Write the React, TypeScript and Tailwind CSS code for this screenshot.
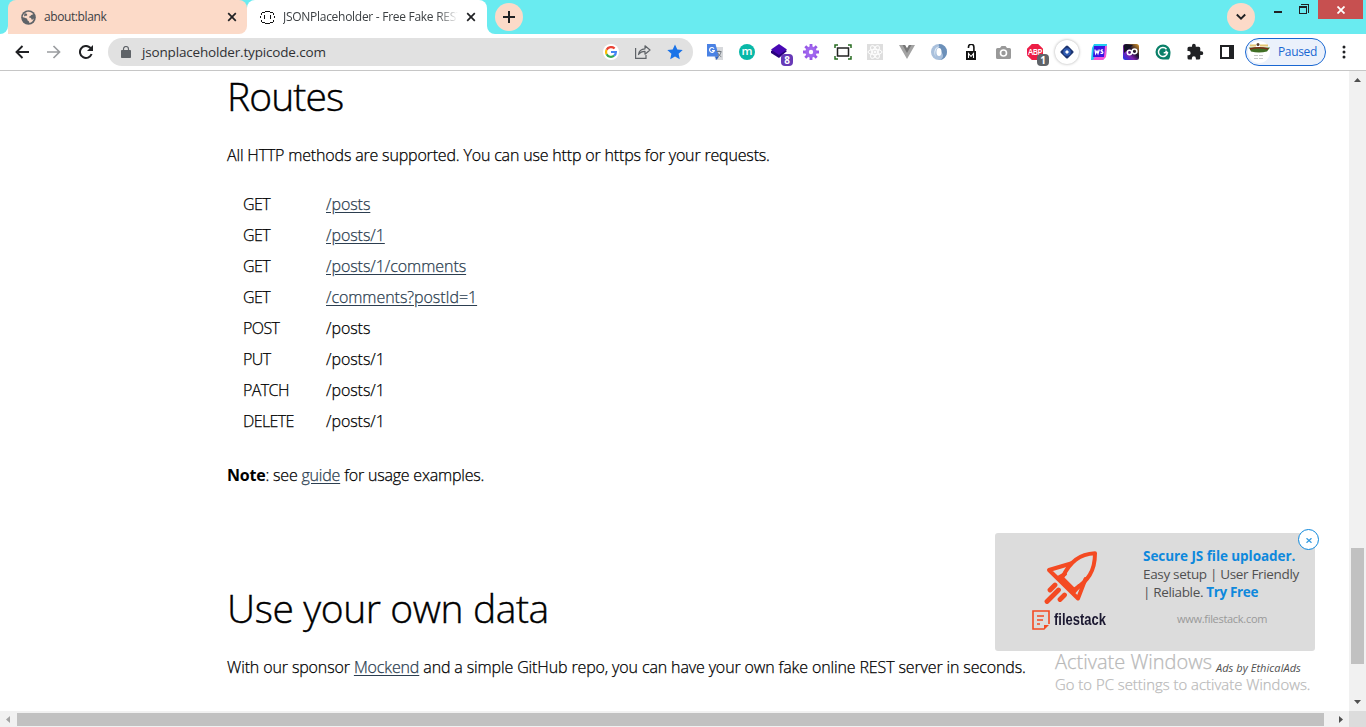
import React from "react";

const routes: { method: string; path: string; link: boolean }[] = [
  { method: "GET", path: "/posts", link: true },
  { method: "GET", path: "/posts/1", link: true },
  { method: "GET", path: "/posts/1/comments", link: true },
  { method: "GET", path: "/comments?postId=1", link: true },
  { method: "POST", path: "/posts", link: false },
  { method: "PUT", path: "/posts/1", link: false },
  { method: "PATCH", path: "/posts/1", link: false },
  { method: "DELETE", path: "/posts/1", link: false },
];

function Close() {
  return (
    <svg className="size-2.5" viewBox="0 0 10 10" stroke="#202124" strokeWidth="1.7">
      <path d="M1.2 1.2l7.6 7.6M8.8 1.2L1.2 8.8" />
    </svg>
  );
}

function TabStrip() {
  return (
    <div className="flex h-[34px] shrink-0 bg-[#69ebf0] text-[12px] text-[#3c4043]">
      <div className="flex w-2 items-end bg-white">
        <div className="h-full w-2 rounded-br-lg bg-[#69ebf0]" />
      </div>
      <div className="flex w-[239px] bg-white">
        <div className="flex w-full items-center rounded-t-lg rounded-br-lg bg-[#fcdac8] pl-[13px] pr-[10px] shadow-[0_-8px_0_0_#69ebf0]">
          <svg className="size-[15px] shrink-0" viewBox="0 0 15 15">
            <circle cx="7.5" cy="7.5" r="7.3" fill="#5f6368" />
            <path d="M7.6 1.7c2 .1 3.7 1 4.7 2.6-.8.6-2 .3-2.5 1.2-.3.9-1.7.6-1.7 1.6 0 .8 1.4.6 2 1.1.5.6 0 1.4 1 1.5.6 0 1.200-.7 1.800-1.100-.5 2.200-2.300 4-4.600 4.500.3-1.100-.5-1.900-1.300-2.300-1-.5-.4-1.500-1.100-2.200C4.900 7.700 3 7.600 1.700 6.900 2 4 4.500 1.700 7.600 1.700z" fill="#fcdac8" />
            <path d="M3.500 3.200C5.200 3 6.500 4 6.200 5.200 5.800 6.300 3.800 5.300 3 6.500" fill="#5f6368" />
          </svg>
          <span className="ml-2 flex-1 tracking-[-0.4px]">about:blank</span>
          <Close />
        </div>
      </div>
      <div className="flex w-[240px] bg-[#69ebf0]">
        <div className="flex w-full items-center rounded-t-lg bg-white pl-[13px] pr-[11px]">
          <svg className="size-[15px] shrink-0" viewBox="0 0 15 15" fill="none" stroke="#111" shapeRendering="crispEdges">
            <path d="M2 2.500h3M5 1.500h5M10 2.500h3M2 12.500h3M5 13.500h5M10 12.500h3M1.500 3v2M13.500 3v2M1.500 10v2M13.500 10v2M.5 6v2M14.500 6v2" />
            <path d="M4.500 5v4M10.500 5v4" />
          </svg>
          <span className="ml-2 w-[175px] overflow-hidden whitespace-nowrap tracking-[-0.28px] [mask-image:linear-gradient(to_right,#000_88%,transparent)]">
            JSONPlaceholder - Free Fake REST
          </span>
          <span className="ml-auto"><Close /></span>
        </div>
      </div>
      <div className="w-2 bg-white"><div className="h-full w-2 rounded-bl-lg bg-[#69ebf0]" /></div>
      <div className="flex size-7 items-center justify-center self-center rounded-full bg-[#fcdac8]">
        <svg className="size-3" viewBox="0 0 12 12" stroke="#202124" strokeWidth="2"><path d="M6 0v12M0 6h12" /></svg>
      </div>
      <div className="ml-auto flex">
        <div className="flex size-7 items-center justify-center self-center rounded-full bg-[#fcdac8]">
          <svg className="size-[10px]" viewBox="0 0 10 10" fill="none" stroke="#202124" strokeWidth="1.9"><path d="M.8 2.500L5 6.700l4.200-4.200" /></svg>
        </div>
        <svg className="ml-[19px] h-5 w-11" viewBox="0 0 44 20" fill="none" stroke="#202124" shapeRendering="crispEdges">
          <path d="M0 12h8" strokeWidth="2" />
          <path d="M27 4.500h7.500V13" />
          <path d="M25.500 7v6.500h7V7" /><path d="M25 7h8" strokeWidth="2" />
        </svg>
        <div className="mr-[3px] flex h-[19px] w-[45px] items-center justify-center bg-[#c75050]">
          <svg className="size-2" viewBox="0 0 8 8" stroke="white" strokeWidth="1.800"><path d="M.5.5l7 7M7.500.5l-7 7" /></svg>
        </div>
      </div>
    </div>
  );
}

function Slot({ children }: { children: React.ReactNode }) {
  return <div className="relative flex w-8 shrink-0 items-center justify-center">{children}</div>;
}

function Extensions() {
  return (
    <div className="flex h-7">
      <Slot>
        <svg className="size-4" viewBox="0 0 16 16">
          <path d="M6 3h10v13H8z" fill="#d7d9dc" /><path d="M0 0h8.500l3.500 12.500H0z" fill="#4a82e4" /><path d="M8 12.500h4L9.500 16z" fill="#3063c0" />
          <path d="M7 4.600A2.400 2.400 0 1 0 7.300 6.500H5" fill="none" stroke="white" strokeWidth="1.200" />
          <path d="M9.500 7.500h5M12 6.500v1M14 8c-.5 2.500-2 4-3.500 4.500M10.800 9c.7 1.800 2 3 3.500 3.700" fill="none" stroke="#717880" strokeWidth="1" />
        </svg>
      </Slot>
      <Slot><div className="flex size-4 items-center justify-center rounded-full bg-[#08b8a8] pb-[3px] text-[11.500px] font-semibold leading-none text-white">m</div></Slot>
      <Slot>
        <svg className="size-4" viewBox="0 0 16 16"><path d="M0 7l8-5 8 5-8 7-8-5z" fill="#29027c" /><path d="M0 5.500L8 0l8 5.500L8 11z" fill="#4808b4" /></svg>
        <span className="absolute left-[18px] top-4 flex h-3 w-3 items-center justify-center rounded-sm bg-[#673ab7] text-[10px] font-bold leading-none text-white">8</span>
      </Slot>
      <Slot>
        <svg className="size-4" viewBox="0 0 16 16"><path d="M8 0v16M0 8h16M2.300 2.300l11.400 11.400M13.700 2.300L2.300 13.700" stroke="#9758e6" strokeWidth="2.800" /><circle cx="8" cy="8" r="5.700" fill="#a066ee" /><circle cx="8" cy="8" r="2.200" fill="white" /></svg>
      </Slot>
      <Slot>
        <svg className="h-4 w-[18px]" viewBox="0 0 18 16" fill="none" strokeWidth="1.500"><path d="M1 4V1h3M14 1h3v3M1 12v3h3M17 12v3h-3" stroke="#276c21" /><rect x="3.500" y="4" width="11" height="8" stroke="#222" /></svg>
      </Slot>
      <Slot>
        <svg className="size-4" viewBox="0 0 16 16" fill="none" stroke="white"><rect width="16" height="16" fill="#dedede" stroke="none" /><ellipse cx="8" cy="8" rx="7" ry="2.700" /><ellipse cx="8" cy="8" rx="7" ry="2.700" transform="rotate(60 8 8)" /><ellipse cx="8" cy="8" rx="7" ry="2.700" transform="rotate(120 8 8)" /><circle cx="8" cy="8" r="1" fill="white" /></svg>
      </Slot>
      <Slot>
        <svg className="h-[14px] w-4" viewBox="0 0 16 14"><path d="M0 0h6l2 3.500L10 0h6L8 14z" fill="#a3a3a3" /><path d="M3.500 0H6l2 3.500L10 0h2.500L8 8z" fill="#777" /></svg>
      </Slot>
      <Slot>
        <svg className="size-4" viewBox="0 0 16 16"><circle cx="8" cy="8" r="8" fill="#a9c0dc" /><path d="M8 0a8 8 0 0 1 0 16c4-1 5-4 3-7S7 3 8 0z" fill="#6c90b9" /><path d="M9 2C4 3 2 7 4.500 13 3.500 7 5 4 9 2z" fill="#e6f0fa" /><ellipse cx="8" cy="8" rx="2.500" ry="4" fill="#fff" /></svg>
      </Slot>
      <Slot>
        <svg className="h-[17px] w-3" viewBox="0 0 12 17"><path d="M3.500 4V3a2.700 2.700 0 0 1 5.400 0v5" fill="none" stroke="#111" strokeWidth="1.600" /><path d="M1 7h10v9H1z" fill="#111" /><path d="M3.500 14V9.500L6 12.500l2.500-3V14" fill="none" stroke="white" strokeWidth="1.100" /></svg>
      </Slot>
      <Slot>
        <svg className="h-[13px] w-[15px]" viewBox="0 0 15 13"><path d="M1.500 2H4l1.500-2h4L11 2h2.500A1.500 1.500 0 0 1 15 3.500v8a1.500 1.500 0 0 1-1.500 1.500h-12A1.500 1.500 0 0 1 0 11.500v-8A1.500 1.500 0 0 1 1.500 2z" fill="#999" /><circle cx="7.500" cy="7" r="3" fill="#999" stroke="white" strokeWidth="1.600" /></svg>
      </Slot>
      <Slot>
        <div className="flex size-4 items-center justify-center bg-[#ed1e45] text-[8px] font-semibold leading-none tracking-[-0.5px] text-white [clip-path:polygon(30%_0,70%_0,100%_30%,100%_70%,70%_100%,30%_100%,0_70%,0_30%)]">ABP</div>
        <span className="absolute left-[18px] top-4 flex h-3 w-3 items-center justify-center rounded-sm bg-[#5f6368] text-[10px] font-bold leading-none text-white">1</span>
      </Slot>
      <Slot>
        <div className="flex size-6 items-center justify-center rounded-full bg-white shadow-[0_0_3px_#aaa]">
          <svg className="size-[14px]" viewBox="0 0 14 14"><path d="M7 2L12 7 7 12 2 7z" fill="#1c3470" stroke="#1c3470" strokeWidth="3" strokeLinejoin="round" /><circle cx="7" cy="7" r="3.800" fill="#315db5" /><path d="M7 5L9 7 7 9 5 7z" fill="#fff" /></svg>
        </div>
      </Slot>
      <Slot>
        <svg className="size-4" viewBox="0 0 16 16"><path d="M3 0h13l-1 12-3 4H0L1 4z" fill="#22ccf0" /><path d="M9 2h7l-1 11-3 3H2l3-5z" fill="#f554d8" /><path d="M3 2h11l-1 11H2z" fill="#3814e2" /><path d="M4 5.500l.6 4L6 7l1 2.500L8.300 5.500M12 6c-2-.7-2.700 1-1 1.500s.8 2.500-1.500 1.600" stroke="white" fill="none" strokeWidth="1.300" /></svg>
      </Slot>
      <Slot>
        <svg className="size-4" viewBox="0 0 16 16"><defs><linearGradient id="orb" x1="0" y1="1" x2="1" y2="0"><stop stopColor="#1a35ec" /><stop offset=".35" stopColor="#7e20b0" /><stop offset=".6" stopColor="#1b112b" /><stop offset="1" stopColor="#e09b28" /></linearGradient></defs><rect width="16" height="16" rx="2.500" fill="url(#orb)" /><path d="M1 1h9L1 9z" fill="#131326" /><circle cx="6.500" cy="8.500" r="2.200" fill="none" stroke="white" strokeWidth="1.500" /><circle cx="11.500" cy="7.300" r="2.400" fill="none" stroke="white" strokeWidth="1.500" /></svg>
      </Slot>
      <Slot>
        <svg className="size-4" viewBox="0 0 16 16"><path d="M8 .5A7.500 7.500 0 0 1 15.500 8c0 3-.6 7-2 7.500H8A7.500 7.500 0 0 1 8 .5z" fill="#0a8069" /><path d="M11.500 5.200A4.500 4.500 0 1 0 12.400 8.800H8.700M10.500 6.800l2 2" fill="none" stroke="white" strokeWidth="1.500" /></svg>
      </Slot>
      <Slot>
        <svg className="size-[18px]" viewBox="0 0 24 24" fill="#202124"><path d="M20.500 11H19V7a2 2 0 0 0-2-2h-4V3.500a2.500 2.500 0 0 0-5 0V5H4a2 2 0 0 0-2 2v3.800h1.500a2.700 2.700 0 0 1 0 5.400H2V20a2 2 0 0 0 2 2h3.800v-1.500a2.700 2.700 0 0 1 5.400 0V22H17a2 2 0 0 0 2-2v-4h1.500a2.500 2.500 0 0 0 0-5z" /></svg>
      </Slot>
      <Slot>
        <svg className="h-[14px] w-[14px]" viewBox="0 0 14 14"><path d="M0 0h14v14H0z" fill="#202124" /><path d="M2 2h7v10H2z" fill="white" /></svg>
      </Slot>
    </div>
  );
}

function Toolbar() {
  return (
    <div className="flex h-[37px] shrink-0 items-center border-b border-[#c6c6c6] bg-white">
      <div className="ml-1.5 flex">
        <Slot><svg className="size-[14px]" viewBox="0 0 14 14" fill="none" stroke="#202124" strokeWidth="1.900"><path d="M14 7H1.500M7.500 1L1.500 7l6 6" /></svg></Slot>
        <Slot><svg className="size-[14px]" viewBox="0 0 14 14" fill="none" stroke="#9b9da0" strokeWidth="1.700"><path d="M0 7h12.500M6.500 1l6 6-6 6" /></svg></Slot>
        <Slot><svg className="size-[14px]" viewBox="0 0 14 14"><path d="M12.600 9A6 6 0 1 1 11.300 2.800L12.500 4" fill="none" stroke="#202124" strokeWidth="2" /><path d="M14 0v6H8z" fill="#202124" /></svg></Slot>
      </div>
      <div className="ml-1.5 flex h-7 w-[585px] items-center rounded-full bg-[#e1e1e1] pl-[13px]">
        <svg className="h-3 w-[10px]" viewBox="0 0 10 12"><path d="M.8 4h8.400q.8 0 .8.800v6.400q0 .8-.8.800H.8Q0 12 0 11.200V4.800Q0 4 .8 4z" fill="#5f6368" /><path d="M2.500 4.500V3a2.500 2.500 0 0 1 5 0v1.500" fill="none" stroke="#5f6368" strokeWidth="1.200" /></svg>
        <span className="ml-[11px] text-[13.500px] tracking-[-0.17px] text-[#303134]">jsonplaceholder.typicode.com</span>
        <div className="ml-auto mr-0.5 flex">
          <Slot>
            <div className="flex size-4 items-center justify-center rounded-full bg-white">
              <svg className="size-3" viewBox="0 0 12 12" fill="none" strokeWidth="2.200"><path d="M9.600 2.600A4.900 4.900 0 0 0 1.600 3.800" stroke="#ea4335" /><path d="M1.600 3.800a4.900 4.900 0 0 0 0 4.400" stroke="#fbbc05" /><path d="M1.600 8.200a4.900 4.900 0 0 0 7.500 1.500" stroke="#34a853" /><path d="M6 6h4.900c0 1.600-.6 2.800-1.800 3.700" stroke="#4285f4" /></svg>
            </div>
          </Slot>
          <Slot><svg className="h-[14px] w-4" viewBox="0 0 16 14" fill="none" stroke="#5f6368" strokeWidth="1.200"><path d="M.6 3v10.400H11V10" /><path d="M3.500 9.500C4 6 6.500 3.900 10 3.800V.8L15 5l-5 4.200v-2.900C7 6.300 5 7.300 3.500 9.500z" strokeLinejoin="round" /></svg></Slot>
          <Slot><svg className="size-4" viewBox="0 0 16 16"><path d="M8 .5l2.300 5.100 5.400.5-4.100 3.700 1.200 5.400L8 12.400l-4.800 2.800 1.200-5.400L.3 6.100l5.400-.5z" fill="#1a73e8" /></svg></Slot>
        </div>
      </div>
      <div className="ml-1.5"><Extensions /></div>
      <div className="ml-0.5 flex h-7 w-[81px] items-center rounded-full border border-[#1967d2] bg-[#ebf1fb] pl-0.5">
        <svg className="size-[22px]" viewBox="0 0 22 22"><circle cx="11" cy="11" r="11" fill="white" /><path d="M1 6.500h21l-3 4q-8 2-16 0z" fill="#416f25" /><path d="M2 8q9-2.500 18 0" stroke="#7d2c16" strokeWidth="1.500" fill="none" /><path d="M2 4.500h6M12 4.500h8" stroke="#e2c674" strokeWidth="2" /><circle cx="10" cy="3.500" r="1.500" fill="#59412c" /><path d="M6 14.500h10M6 17.500h10" stroke="#c7c7c7" strokeDasharray="4 1" /></svg>
        <span className="ml-2 text-[12px] tracking-[-0.35px] text-[#1967d2]">Paused</span>
      </div>
      <svg className="ml-4 h-[14px] w-1" viewBox="0 0 4 14" fill="#202124"><circle cx="2" cy="2" r="1.500" /><circle cx="2" cy="7" r="1.500" /><circle cx="2" cy="12" r="1.500" /></svg>
    </div>
  );
}

function Ad() {
  return (
    <aside className="absolute left-[995px] top-[462px] flex h-[118px] w-80 rounded-[3px] bg-[#dcdcdc]">
      <div className="ml-[37px] w-[111px] pt-[18px]">
        <svg className="ml-3 h-[53px] w-[55px]" viewBox="0 0 55 53" fill="none" stroke="#f44a22" strokeWidth="4" strokeLinejoin="round" strokeLinecap="round">
          <path d="M51 2.200C36 3 26 10 18 27L30 39C44 30 51 20 51 2.200z" />
          <path d="M27 12.500L5 19 34 47.500 41.500 28M14 27l7-4M29 42l6-7" />
          <path d="M6 39l5-5M3 50.500l11.500-11.500M16 48.500l4.500-4.500" strokeWidth="4.800" />
        </svg>
        <div className="mt-[6px] flex items-center">
          <svg className="h-5 w-[18px]" viewBox="0 0 18 20" fill="none" stroke="#f44a22" strokeWidth="1.600"><path d="M12 19H1V1h16v13" /><path d="M5 6h7M5 10h6M5 14h3" /><path d="M12 20v-5h5z" fill="#f44a22" stroke="none" /></svg>
          <span className="ml-1 inline-block origin-left scale-x-[0.81] font-['Liberation_Sans',sans-serif] text-[16px] font-bold leading-5 text-[#1b1830]">filestack</span>
        </div>
      </div>
      <div className="w-[160px] pt-[14px] text-[13.500px] leading-[18px] text-[#505050]">
        <p className="whitespace-nowrap font-bold tracking-[-0.06px] text-[#0e88dc]">Secure JS file uploader.</p>
        <p className="whitespace-nowrap tracking-[-0.33px]">Easy setup | User Friendly</p>
        <p className="whitespace-nowrap tracking-[-0.35px]">| Reliable. <b className="text-[#0e88dc]">Try Free</b></p>
        <p className="mt-[9px] pl-[34px] text-[11px] tracking-[-0.3px] text-[#999]">www.filestack.com</p>
      </div>
      <div className="absolute -right-[4px] -top-[4px] flex size-[21px] items-center justify-center rounded-full border border-[#0e88dc] bg-white">
        <svg className="mt-0.5 h-[5px] w-[6px]" viewBox="0 0 6 5" stroke="#359be0" strokeWidth="1.200"><path d="M.5.2l5 4.600M5.500.2l-5 4.600" /></svg>
      </div>
    </aside>
  );
}

export default function App() {
  return (
    <div className="flex h-[727px] w-[1366px] flex-col overflow-hidden bg-white font-['Open_Sans','Noto_Sans',sans-serif]">
      <TabStrip />
      <Toolbar />
      <div className="flex h-[640px]">
        <main className="relative w-[1349px] pl-[227px] pt-px text-[16px] font-light leading-6 text-black [-webkit-text-stroke:0.25px]">
          <h1 className="text-[39px] leading-[48px] tracking-[-0.9px] [-webkit-text-stroke:0.4px]">Routes</h1>
          <p className="mt-[23px] tracking-[-0.17px]">All HTTP methods are supported. You can use http or https for your requests.</p>
          <div className="mt-[21px]">
            {routes.map((r, i) => (
              <div key={i} className="flex h-[31px] items-center pl-4">
                <span className="w-[83px] tracking-[-0.6px]">{r.method}</span>
                {r.link ? <a className="tracking-[-0.05px] text-[#2c3e50] underline underline-offset-2">{r.path}</a> : <span className="tracking-[-0.05px]">{r.path}</span>}
              </div>
            ))}
          </div>
          <p className="mt-[27px] tracking-[-0.2px]"><b className="font-bold [-webkit-text-stroke:0]">Note</b>: see <a className="text-[#2c3e50] underline underline-offset-2">guide</a> for usage examples.</p>
          <h1 className="mt-[97px] text-[39px] leading-[48px] tracking-[-0.4px] [-webkit-text-stroke:0.4px]">Use your own data</h1>
          <p className="mt-[23px] tracking-[-0.13px]">With our sponsor <a className="text-[#2c3e50] underline underline-offset-2">Mockend</a> and a simple GitHub repo, you can have your own fake online REST server in seconds.</p>
          <div className="absolute left-[1055px] top-[579px] text-[#b9b9b9]">
            <div className="flex items-end">
              <span className="text-[20px] leading-6">Activate Windows</span>
              <span className="relative top-px ml-1 text-[11px] font-normal italic leading-[14px] tracking-[0.05px] text-[#505050] [-webkit-text-stroke:0]">Ads by EthicalAds</span>
            </div>
            <p className="text-[14.800px] leading-5 tracking-[0.04px]">Go to PC settings to activate Windows.</p>
          </div>
          <div className="font-normal [-webkit-text-stroke:0]"><Ad /></div>
        </main>
        <div className="flex w-[17px] flex-col items-center bg-[#f1f1f1]">
          <svg className="mt-[7px] h-1 w-[7px]" viewBox="0 0 7 4"><path d="M0 4L3.500 0 7 4z" fill="#505050" /></svg>
          <div className="mt-[466px] h-[116px] w-[13px] bg-[#c1c1c1]" />
          <svg className="mt-9 h-1 w-[7px]" viewBox="0 0 7 4"><path d="M0 0h7L3.500 4z" fill="#505050" /></svg>
        </div>
      </div>
      <div className="flex h-4 items-center bg-[#f1f1f1]">
        <svg className="ml-1.5 h-[7px] w-1" viewBox="0 0 4 7"><path d="M4 0v7L0 3.500z" fill="#a3a3a3" /></svg>
        <div className="ml-[7px] h-[13px] w-[1307px] bg-[#c1c1c1]" />
        <svg className="ml-[15px] h-[7px] w-1" viewBox="0 0 4 7"><path d="M0 0v7l4-3.500z" fill="#505050" /></svg>
        <div className="ml-auto h-4 w-[17px] bg-[#dcdcdc]" />
      </div>
    </div>
  );
}
